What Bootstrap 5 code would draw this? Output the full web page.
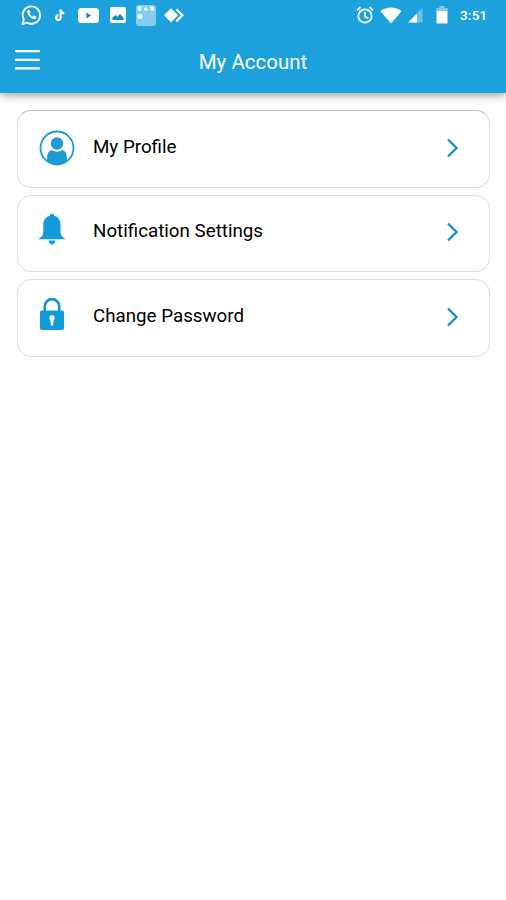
<!DOCTYPE html>
<html lang="en">
<head>
<meta charset="utf-8">
<meta name="viewport" content="width=device-width, initial-scale=1">
<title>My Account</title>
<link href="https://cdn.jsdelivr.net/npm/bootstrap@5.3.0/dist/css/bootstrap.min.css" rel="stylesheet">
<style>
  :root { --brand: #1ca1dc; }
  body { font-family: Roboto, "Liberation Sans", sans-serif; color: #000; min-height: 900px; }
  svg { display: block; flex: none; }
  .app-header { background: var(--brand); height: 93px; box-shadow: 0 2px 9px rgba(0,0,0,.4); }
  .status-bar { height: 30px; padding: 0 18px 0 21px; }
  .ic-note { margin-left: 13px; }
  .ic-video { margin-left: 13px; }
  .ic-photo { margin-left: 11px; }
  .ic-app { margin-left: 10px; }
  .ic-desk { margin-left: 8px; }
  .ic-wifi { margin-left: 6px; }
  .ic-signal { margin-left: 6px; }
  .ic-battery { margin-left: 13px; }
  .clock { font-size: 13.5px; font-weight: 500; letter-spacing: .2px; line-height: 20px; width: 28px; margin-left: 12px; }
  .title-bar { height: 63px; display: grid; grid-template-columns: 1fr auto 1fr; padding: 0 14px; }
  .page-title { font-size: 20.5px; line-height: 24px; padding-top: 20px; }
  .menu-btn { padding-top: 19px; }
  .menu-list { padding: 17px 16px 0 17px; gap: 7.2px; }
  .menu-item { height: 77.5px; border: 1.5px solid #dedede; border-radius: 14px; padding: 0 29px 5px 19px; color: #000; background: #fff; }
  .menu-item:first-child { border-top-color: #c4c4c4; }
  .item-icon { width: 56px; }
  .item-icon .raised { margin-bottom: 3px; }
  .item-label { font-size: 18.75px; line-height: 24px; }
  .menu-item:first-child .item-label { padding-top: 1px; }
  .chevron { margin-top: 3px; }
</style>
</head>
<body class="bg-white">
<header class="app-header text-white">
  <div class="status-bar d-flex align-items-center justify-content-between">
    <div class="d-flex align-items-center">
      <svg width="21" height="22" viewBox="0 0 21 22" fill="none" stroke="#fff" stroke-width="1.9"><path d="M1.500 20 2.800 15.300A8.700 8.700 0 1 1 6.200 18.700Z" stroke-linejoin="round"/><path d="M7.300 5.800c-2 1.300-1 4.300 1.200 6.600s5 3.600 6.500 1.800c.7-1 .4-1.500-.4-1.900l-1.600-.8-1.400 1.200c-1.400-.7-2.400-1.700-3.100-3.100l1-1.100-.8-2.200z" fill="#fff" stroke="none"/></svg>
      <svg class="ic-note" width="10" height="13" viewBox="0 0 10 13" fill="none" stroke="#fff" stroke-width="2.200"><path d="M5.600 .5v8.200a2.300 2.300 0 1 1-2.300-2.300M5.700 1.500c.4 1.800 1.600 2.600 3.600 2.800"/></svg>
      <svg class="ic-video" width="21" height="15" viewBox="0 0 21 15"><rect width="21" height="15" rx="3.500" fill="#fff"/><path d="m8.300 4.600 5 2.900-5 2.900z" fill="#1a86b8"/></svg>
      <svg class="ic-photo" width="16" height="16" viewBox="0 0 16 16"><rect width="16" height="16" rx="2" fill="#fff"/><path d="M2.500 13V10.500L5.500 8l2 2L10 7l3.500 4v2z" fill="#1689ba"/></svg>
      <svg class="ic-app" width="20" height="21" viewBox="0 0 20 21"><rect width="20" height="21" rx="3" fill="#82cdf0"/><path d="M1.500 1.500h4.500L5 5.500H2.500zm6 4L9.500 1.500l2.500 4zM13.500 1.500h4.500v4h-3z" fill="#fff"/><circle cx="4" cy="11.500" r="2.400" fill="#fff"/></svg>
      <svg class="ic-desk" width="21" height="15" viewBox="0 0 21 15"><path d="m7 .3 7 7-7 7-7-7z" fill="#fff"/><path d="m12.300 1.200 6.100 6.100-6.100 6.100" fill="none" stroke="#fff" stroke-width="2.200"/></svg>
    </div>
    <div class="d-flex align-items-center">
      <svg width="18" height="18" viewBox="0 0 18 18" fill="none" stroke="#fff" stroke-width="1.800"><circle cx="9" cy="10" r="6.700"/><path d="M9 6v4.500l3.200 1.800M1 4.200 4.500 1.200M17 4.200l-3.500-3"/></svg>
      <svg class="ic-wifi" width="22" height="17" viewBox="0 0 22 17"><path d="M.5 4.200C6.500-.8 15.500-.8 21.500 4.200L11 16.500z" fill="#fff"/></svg>
      <svg class="ic-signal" width="15" height="15" viewBox="0 0 15 15"><path d="M0 14.500 14.500 0v14.500z" fill="#fff" opacity=".35"/><path d="M0 14.500 9 5.500v9z" fill="#fff"/></svg>
      <svg class="ic-battery" width="12" height="18" viewBox="0 0 12 18"><path d="M3.500 0h5v2H11.500v4H.5V2h3z" fill="#fff" opacity=".45"/><path d="M.5 5h11v12.500H.5z" fill="#fff"/></svg>
      <span class="clock text-nowrap">3:51</span>
    </div>
  </div>
  <div class="title-bar">
    <div class="menu-btn"><svg width="27" height="22" viewBox="0 0 27 22" stroke="#fff" stroke-width="2.300" stroke-linecap="round"><path d="M2 2.200h23M2 10.800h23M2 19.400h23"/></svg></div>
    <h1 class="page-title m-0 fw-normal">My Account</h1>
    <span></span>
  </div>
</header>
<main class="menu-list d-flex flex-column">
  <a href="#" class="menu-item d-flex align-items-center text-decoration-none">
    <span class="item-icon"><svg class="mt-1" width="38" height="36" viewBox="0 0 38 36"><circle cx="20" cy="18" r="16.500" fill="#fff" stroke="#1d9bd4" stroke-width="1.800"/><circle cx="20" cy="13.500" r="6.200" fill="#1d9bd4"/><path d="M10 30.500C10 24.500 11 20.800 15 20c2.500 2.200 7.500 2.200 10 0 4 .8 5 4.500 5 10.500C24 35.800 16 35.800 10 30.500z" fill="#1d9bd4"/></svg></span>
    <span class="item-label flex-grow-1">My Profile</span>
    <svg class="chevron" width="14" height="20" viewBox="0 0 14 20" fill="none" stroke="#1c90ce" stroke-width="2.400"><path d="M2 1.500 10.500 10 2 18.500"/></svg>
  </a>
  <a href="#" class="menu-item d-flex align-items-center text-decoration-none">
    <span class="item-icon"><svg class="raised" width="30" height="32" viewBox="0 0 30 32" fill="#129bd8"><path d="M15 .8c1.500 0 2 .9 2.200 2 4.300 1.300 6.300 4.500 6.300 9v7c0 3.500 1.700 5.200 5 7.400H1.300c3.300-2.200 5-3.900 5-7.400v-7c0-4.500 2.200-7.700 6.500-9 .2-1.100.7-2 2.200-2zM11.500 27.500h7c-.5 2.700-1.800 4-3.500 4s-3-1.300-3.500-4z"/></svg></span>
    <span class="item-label flex-grow-1">Notification Settings</span>
    <svg class="chevron" width="14" height="20" viewBox="0 0 14 20" fill="none" stroke="#1c90ce" stroke-width="2.400"><path d="M2 1.500 10.500 10 2 18.500"/></svg>
  </a>
  <a href="#" class="menu-item d-flex align-items-center text-decoration-none">
    <span class="item-icon"><svg class="raised" width="30" height="34" viewBox="0 0 30 34"><path d="M7.800 15V9.300a7.200 7.200 0 0 1 14.400 0V15" fill="none" stroke="#1594cf" stroke-width="2.600"/><rect x="3" y="13.500" width="24" height="19.500" rx="1.800" fill="#129bd8"/><path d="M15 18a2.800 2.800 0 0 1 1.700 5l-.7 5.500h-2L13.300 23A2.800 2.800 0 0 1 15 18z" fill="#fff"/></svg></span>
    <span class="item-label flex-grow-1">Change Password</span>
    <svg class="chevron" width="14" height="20" viewBox="0 0 14 20" fill="none" stroke="#1c90ce" stroke-width="2.400"><path d="M2 1.500 10.500 10 2 18.500"/></svg>
  </a>
</main>
<script src="https://cdn.jsdelivr.net/npm/bootstrap@5.3.0/dist/js/bootstrap.bundle.min.js"></script>
</body>
</html>
